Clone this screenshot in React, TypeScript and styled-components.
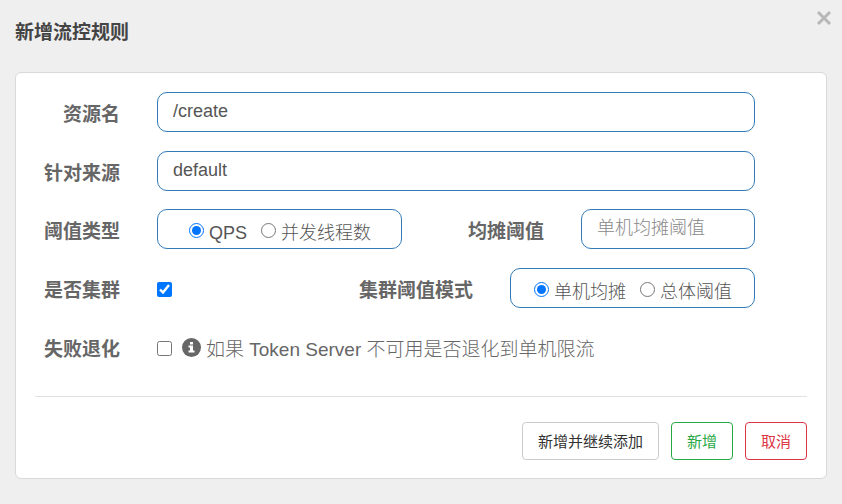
import React, { useState } from "react";
import styled, { createGlobalStyle } from "styled-components";

const GlobalStyle = createGlobalStyle`
  * { box-sizing: border-box; }
  body {
    margin: 0;
    min-height: 100vh;
    background: #efefef;
    color: #555;
    font-family: "Liberation Sans", "Noto Sans CJK SC", sans-serif;
  }
  button, input { font-family: inherit; }
`;

const Dialog = styled.main`
  padding: 8px 15px 25px;
`;

const Header = styled.header`
  display: flex;
  align-items: flex-start;
  justify-content: space-between;
  height: 64px;
  margin-right: -7px;
`;

const Title = styled.h1`
  margin: 11px 0 0;
  font-size: 19px;
  line-height: 28px;
  font-weight: 700;
  color: #444;
`;

const CloseButton = styled.button`
  display: flex;
  margin: 0;
  padding: 2px;
  border: 0;
  background: none;
  color: #b8b8b8;
  cursor: pointer;
`;

const Card = styled.form`
  padding: 19px 19px 18px;
  border: 1px solid #d9d9d9;
  border-radius: 6px;
  background: #fff;
`;

const Rows = styled.div`
  display: flex;
  flex-direction: column;
  gap: 19px;
  padding-right: 52px;
  margin-bottom: 18px;
`;

const Row = styled.div`
  display: flex;
  align-items: center;
  height: 40px;
`;

const Label = styled.label<{ $lead?: boolean }>`
  flex: none;
  width: ${(p) => (p.$lead ? "85px" : "auto")};
  margin-left: ${(p) => (p.$lead ? "0" : "auto")};
  margin-right: 37px;
  padding-top: 6px;
  text-align: right;
  font-size: 19px;
  line-height: 28px;
  font-weight: 700;
  color: #666;
`;

const TextInput = styled.input<{ $short?: boolean }>`
  flex: ${(p) => (p.$short ? "none" : "1")};
  width: ${(p) => (p.$short ? "174px" : "auto")};
  min-width: 0;
  height: 40px;
  padding: 0 15px 2px;
  border: 1px solid #337ab7;
  border-radius: 10px;
  background: #fff;
  color: #555;
  font-size: 18px;
  outline: none;
  &::placeholder { color: #888; font-weight: 300; opacity: 1; }
`;

const RadioBox = styled.div`
  display: flex;
  align-items: center;
  justify-content: center;
  gap: 14px;
  width: 245px;
  height: 40px;
  padding-left: 1px;
  border: 1px solid #337ab7;
  border-radius: 10px;
`;

const Choice = styled.label`
  display: flex;
  align-items: center;
  gap: 5px;
  font-size: 18px;
  line-height: 26px;
  white-space: nowrap;
`;

const ChoiceText = styled.span`
  padding-top: 7px;
  font-weight: 300;
`;

const Radio = styled.input`
  width: 15px;
  height: 15px;
  margin: 3px 0 0;
  accent-color: #0075ff;
`;

const Check = styled.input`
  flex: none;
  width: 15px;
  height: 15px;
  margin: 3px 0 0;
  accent-color: #0075ff;
`;

const Hint = styled.label`
  display: flex;
  align-items: center;
  gap: 5px;
  margin-left: 10px;
  font-size: 19px;
  line-height: 28px;
  font-weight: 300;
  color: #666;
  white-space: nowrap;
`;

const HintText = styled.span`
  padding-top: 6px;
`;

const Divider = styled.hr`
  margin: 29px 0 25px;
  border: 0;
  border-top: 1px solid #e2e2e2;
`;

const Actions = styled.footer`
  display: flex;
  justify-content: flex-end;
  gap: 12px;
`;

const tones = {
  plain: { border: "#ccc", text: "#333" },
  success: { border: "#28a745", text: "#28a745" },
  danger: { border: "#dc3545", text: "#dc3545" },
};

const ActionButton = styled.button<{ $tone: keyof typeof tones }>`
  height: 38px;
  padding: 0 15px 2px;
  border: 1px solid ${(p) => tones[p.$tone].border};
  border-radius: 4px;
  background: #fff;
  color: ${(p) => tones[p.$tone].text};
  font-size: 15px;
  cursor: pointer;
`;

function CloseIcon() {
  return (
    <svg width="16" height="16" viewBox="0 0 16 16" aria-hidden="true">
      <path d="M2 2L14 14M14 2L2 14" stroke="currentColor" strokeWidth="3" />
    </svg>
  );
}

function InfoIcon() {
  return (
    <svg width="19" height="19" viewBox="0 0 19 19" aria-hidden="true">
      <circle cx="9.5" cy="9.5" r="9.5" fill="#666" />
      <path d="M8 4h3v2.4H8zM6.5 7.400H11v5h1.500v2h-6v-2H8v-3H6.500z" fill="#fff" />
    </svg>
  );
}

export default function App() {
  const [resource, setResource] = useState("/create");
  const [source, setSource] = useState("default");
  const [threshold, setThreshold] = useState("");
  const [grade, setGrade] = useState("qps");
  const [mode, setMode] = useState("local");
  const [cluster, setCluster] = useState(true);
  const [fallback, setFallback] = useState(false);

  return (
    <>
      <GlobalStyle />
      <Dialog>
        <Header>
          <Title>新增流控规则</Title>
          <CloseButton type="button" aria-label="关闭"><CloseIcon /></CloseButton>
        </Header>
        <Card onSubmit={(e) => e.preventDefault()}>
          <Rows>
            <Row>
              <Label $lead htmlFor="resource">资源名</Label>
              <TextInput id="resource" value={resource} onChange={(e) => setResource(e.target.value)} />
            </Row>
            <Row>
              <Label $lead htmlFor="source">针对来源</Label>
              <TextInput id="source" value={source} onChange={(e) => setSource(e.target.value)} />
            </Row>
          </Rows>
          <Rows>
            <Row>
              <Label $lead as="span" id="grade-label">阈值类型</Label>
              <RadioBox role="radiogroup" aria-labelledby="grade-label">
                <Choice>
                  <Radio type="radio" name="grade" checked={grade === "qps"} onChange={() => setGrade("qps")} />
                  <ChoiceText>QPS</ChoiceText>
                </Choice>
                <Choice>
                  <Radio type="radio" name="grade" checked={grade === "thread"} onChange={() => setGrade("thread")} />
                  <ChoiceText>并发线程数</ChoiceText>
                </Choice>
              </RadioBox>
              <Label htmlFor="threshold">均摊阈值</Label>
              <TextInput
                $short
                id="threshold"
                placeholder="单机均摊阈值"
                value={threshold}
                onChange={(e) => setThreshold(e.target.value)}
              />
            </Row>
            <Row>
              <Label $lead htmlFor="cluster">是否集群</Label>
              <Check id="cluster" type="checkbox" checked={cluster} onChange={(e) => setCluster(e.target.checked)} />
              <Label as="span" id="mode-label">集群阈值模式</Label>
              <RadioBox role="radiogroup" aria-labelledby="mode-label">
                <Choice>
                  <Radio type="radio" name="mode" checked={mode === "local"} onChange={() => setMode("local")} />
                  <ChoiceText>单机均摊</ChoiceText>
                </Choice>
                <Choice>
                  <Radio type="radio" name="mode" checked={mode === "global"} onChange={() => setMode("global")} />
                  <ChoiceText>总体阈值</ChoiceText>
                </Choice>
              </RadioBox>
            </Row>
            <Row>
              <Label $lead htmlFor="fallback">失败退化</Label>
              <Check id="fallback" type="checkbox" checked={fallback} onChange={(e) => setFallback(e.target.checked)} />
              <Hint htmlFor="fallback">
                <InfoIcon />
                <HintText>如果 Token Server 不可用是否退化到单机限流</HintText>
              </Hint>
            </Row>
          </Rows>
          <Divider />
          <Actions>
            <ActionButton type="submit" $tone="plain">新增并继续添加</ActionButton>
            <ActionButton type="submit" $tone="success">新增</ActionButton>
            <ActionButton type="button" $tone="danger">取消</ActionButton>
          </Actions>
        </Card>
      </Dialog>
    </>
  );
}
